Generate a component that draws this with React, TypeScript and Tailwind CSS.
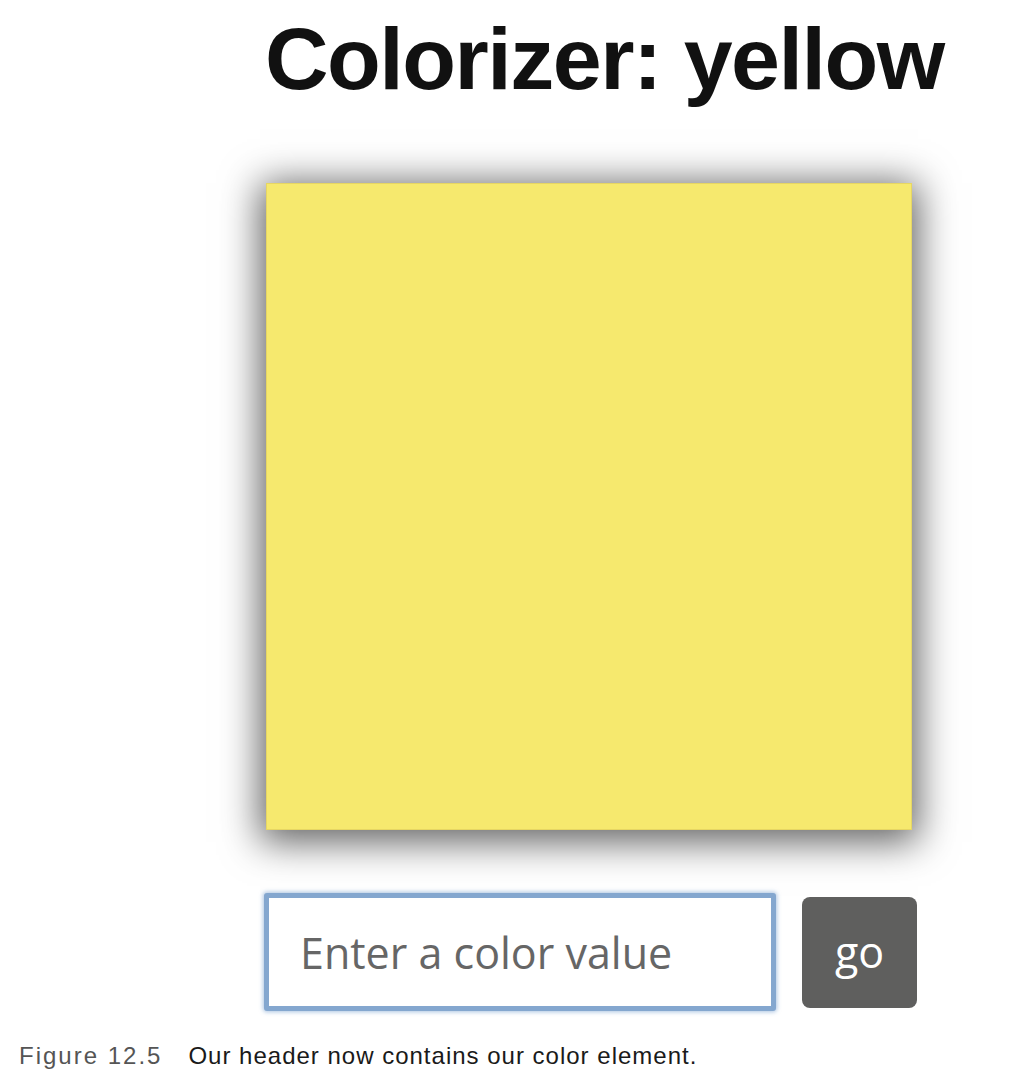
import { useState } from "react";

// Colorizer demo: title, colour swatch, input row and a figure caption
export default function App() {
    const [value, setValue] = useState("");
    const color = "yellow";

    return (
        <div className="w-[1030px] h-[1082px] bg-white overflow-hidden relative">
            <div className="ml-[266px] pt-[15px] flex flex-col">
                <h1 className="text-[88px] leading-[88px] font-bold tracking-[-1.5px] text-[#111] font-['Liberation_Sans',Arial,sans-serif] -ml-[1px] whitespace-nowrap">
                    Colorizer: {color}
                </h1>

                {/* the swatch */}
                <div className="mt-[80px] w-[646px] h-[647px] bg-[#f6e96e] border border-[#e6d663] shadow-[0_6px_36px_6px_rgba(0,0,0,0.62)]" />

                <div className="mt-[63px] -ml-[2px] flex items-center gap-[26px]">
                    <input
                        type="text"
                        value={value}
                        onChange={(e) => setValue(e.target.value)}
                        placeholder="Enter a color value"
                        className="w-[512px] h-[118px] border-[5px] border-[#84a7cf] rounded-[3px] shadow-[0_0_4px_1px_rgba(100,145,200,0.55)] bg-white pl-[31px] text-[43px] font-medium text-[#333] placeholder:text-[#666] outline-none font-['Open_Sans',sans-serif]"
                    />
                    <button className="w-[115px] h-[111px] rounded-[8px] bg-[#5f5f5e] text-white text-[43px] font-['Open_Sans',sans-serif] font-medium">
                        go
                    </button>
                </div>
            </div>

            <p className="absolute left-[19px] top-[1041px] text-[24px] leading-[30px] font-['Liberation_Sans',Arial,sans-serif] whitespace-nowrap">
                <span className="text-[#555] tracking-[2px]">Figure 12.5</span>
                <span className="ml-[26px] tracking-[1px] text-[#1a1a1a]">Our header now contains our color element.</span>
            </p>
        </div>
    );
}
